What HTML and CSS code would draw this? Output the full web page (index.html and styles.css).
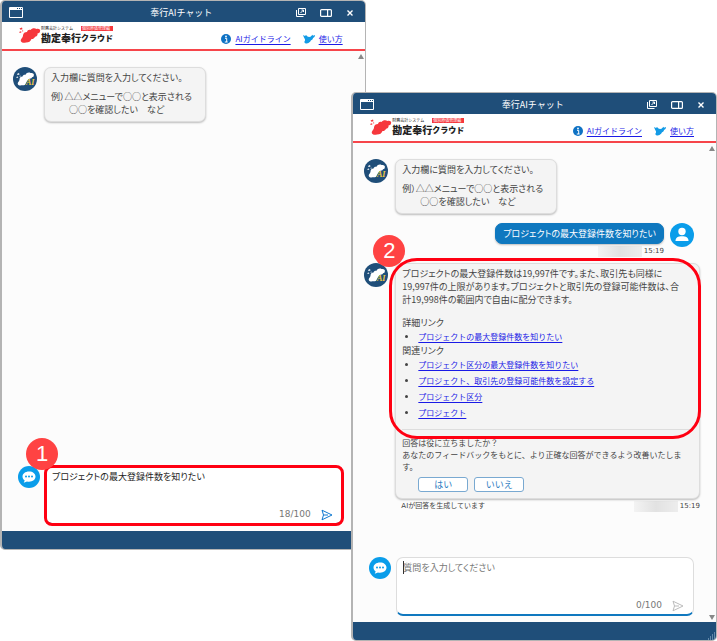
FILE: index.html
```
<!DOCTYPE html>
<html lang="ja">
<head>
	<title>奉行AIチャット</title>
	<meta charset="utf-8" />
	<meta name="viewport" content="width=device-width, initial-scale=1.0">
	<link rel="stylesheet" href="styles.css">
</head>
<body>
	<!-- shared icons -->
	<svg class="sprite" aria-hidden="true">
		<symbol id="app" viewBox="0 0 14 11">
			<path d="M.5.5h13v10H.5z" fill="none" stroke="#fff"/>
			<path d="M1 1h12v2H1z" fill="#fff"/>
			<path d="M8 1.500h1M10 1.500h1M12 1.500h1" stroke="#1f4e79"/>
		</symbol>
		<symbol id="popout" viewBox="0 0 10 9">
			<path d="M2.500.5h7v6h-7zM.5 2v6.500h7" fill="none" stroke="#fff"/>
			<path d="M4.500 5 7.500 2M5.500 2h2v2" fill="none" stroke="#fff"/>
		</symbol>
		<symbol id="dock" viewBox="0 0 12 8">
			<rect x=".6" y=".6" width="10.800" height="6.800" rx="1" fill="none" stroke="#fff" stroke-width="1.200"/>
			<path d="M7.600 1v6" stroke="#fff" stroke-width="1.200"/>
		</symbol>
		<symbol id="close" viewBox="0 0 8 8">
			<path d="m1.500 1.500 5 5m0-5-5 5" stroke="#fff" stroke-width="1.400"/>
		</symbol>
		<symbol id="info" viewBox="0 0 10 10">
			<circle cx="5" cy="5" r="5" fill="#0e72c4"/>
			<path d="M4 4.300h1.700V8M3.800 8h2.800" fill="none" stroke="#fff"/>
			<circle cx="5" cy="2.400" r=".9" fill="#fff"/>
		</symbol>
		<symbol id="cloud" viewBox="0 0 22 16">
			<path d="M2 14.500C1 12 4 11 4 8.500 4 6 6 5 8 5c.5-2 2-2.500 3.500-2C13 .8 16 .8 17.500 2c2-.8 4.500.5 3.500 2.500-.3 1.500-1.500 1.700-2.500 2 .5 2-1 3-2.500 3.200C15.500 11.500 14 12 12.500 12c-1 2.500-2.500 3.500-5.500 3.500-2 .3-4 .5-5-1z"/>
			<path d="m.5 1.500 2.500-1 .5 1.800-2 .5zM0 5l2-.8.5 1L1 6zM3 3.800l1-.5.300 1-1 .3z"/>
		</symbol>
		<symbol id="bird" viewBox="0 0 12 10">
			<path d="M0 1 2 2 3 1l1.500 1.500L6 3l1.500-.2L9.500.8l.5 1L12 1c0 1.500-.8 2.500-2 3-.2 1.500-1 2-2 2.200C7.500 8 6 8 5.500 9 4 9.800 2 9.500 1.500 8.500 1 7 2.500 7 2 5.500 1.500 4 .5 3 0 1z" fill="#139be6"/>
		</symbol>
		<symbol id="ai" viewBox="0 0 24 24">
			<circle cx="12" cy="12" r="12" fill="#1f4e79"/>
			<path d="M5 17.500C4 15.500 6.500 14.500 6.500 12.500c0-2 1.200-3 3-3 .4-1.600 1.700-2 3-1.700C13.500 5.500 16 5 17.500 6c2-.5 4 .6 3.300 2.500 0 1-.8 1.500-1.800 1.800-.2 1-.8 1.200-2 1.200-2 .5-2.800 2.500-4 4.500-.8 2-1.500 2.300-3.500 2.300-2 .2-3.800.4-4.500-.8z" fill="#fff"/>
			<path d="m4 7 2-1 .5 1.500-1.800.6zM3.300 10l1.600-.6.4 1-1.500.6zM6.500 9l1-.5.200 1-.9.2z" fill="#fff"/>
		</symbol>
		<symbol id="person" viewBox="0 0 24 24">
			<circle cx="12" cy="12" r="12" fill="#0a9dea"/>
			<circle cx="12" cy="8.500" r="3.700" fill="#fff"/>
			<path d="M5.500 18c0-3.500 2.500-4.700 6.500-4.700s6.500 1.200 6.500 4.700z" fill="#fff"/>
		</symbol>
		<symbol id="talk" viewBox="0 0 22 22">
			<circle cx="11" cy="11" r="11" fill="#0a9dea"/>
			<path d="M11 5.500c-3.800 0-6.500 2.200-6.500 5 0 1.700.9 3 2.200 4l-1 2.200 3.300-1.200c.6.100 1.300.2 2 .2 3.800 0 6.500-2.300 6.500-5.200s-2.700-5-6.500-5z" fill="#fff"/>
			<g fill="#0a9dea"><circle cx="8" cy="10.500" r="1"/><circle cx="11" cy="10.500" r="1"/><circle cx="14" cy="10.500" r="1"/></g>
		</symbol>
		<symbol id="send" viewBox="0 0 12 12">
			<path d="M1 1.200 11 6 1 10.800 2.500 6zM2.500 6H7" fill="none" stroke="currentColor"/>
		</symbol>
	</svg>

	<main class="desktop">
		<section class="window window-back">
			<div class="titlebar">
				<svg class="icon-app"><use href="#app"/></svg>
				<h1>奉行AIチャット</h1>
				<div class="controls">
					<button aria-label="別ウィンドウ"><svg class="icon-popout"><use href="#popout"/></svg></button>
					<button aria-label="ドッキング"><svg class="icon-dock"><use href="#dock"/></svg></button>
					<button aria-label="閉じる"><svg class="icon-close"><use href="#close"/></svg></button>
				</div>
			</div>
			<header class="header">
				<div class="logo">
					<svg class="logo-mark"><use href="#cloud"/></svg>
					<div class="logo-main"><small>財務会計システム</small><b>勘定奉行</b></div>
					<div class="logo-sub"><small>個別原価管理編</small><b>クラウド</b></div>
				</div>
				<nav>
					<svg class="icon-info"><use href="#info"/></svg><a href="#">AIガイドライン</a>
					<svg class="icon-bird"><use href="#bird"/></svg><a href="#">使い方</a>
				</nav>
			</header>
			<div class="body">
				<div class="content">
					<div class="row">
						<svg class="avatar" viewBox="0 0 24 24"><use href="#ai"/><text x="13" y="18">AI</text></svg>
						<div class="bubble greeting">
							<p>入力欄に質問を入力してください。</p>
							<p>例）△△メニューで○○と表示される<br>　　○○を確認したい　など</p>
						</div>
					</div>
					<form class="composer">
						<svg class="avatar-talk"><use href="#talk"/></svg>
						<div class="field marked">
							<textarea aria-label="質問">プロジェクトの最大登録件数を知りたい</textarea>
							<div class="tools">
								<span>18/100</span>
								<button class="send ready" type="button" aria-label="送信"><svg><use href="#send"/></svg></button>
							</div>
							<span class="step">1</span>
						</div>
					</form>
				</div>
				<div class="scrollbar"><i class="up"></i><i class="down"></i></div>
			</div>
			<div class="statusbar"></div>
		</section>

		<section class="window window-front">
			<div class="titlebar">
				<svg class="icon-app"><use href="#app"/></svg>
				<h1>奉行AIチャット</h1>
				<div class="controls">
					<button aria-label="別ウィンドウ"><svg class="icon-popout"><use href="#popout"/></svg></button>
					<button aria-label="ドッキング"><svg class="icon-dock"><use href="#dock"/></svg></button>
					<button aria-label="閉じる"><svg class="icon-close"><use href="#close"/></svg></button>
				</div>
			</div>
			<header class="header">
				<div class="logo">
					<svg class="logo-mark"><use href="#cloud"/></svg>
					<div class="logo-main"><small>財務会計システム</small><b>勘定奉行</b></div>
					<div class="logo-sub"><small>個別原価管理編</small><b>クラウド</b></div>
				</div>
				<nav>
					<svg class="icon-info"><use href="#info"/></svg><a href="#">AIガイドライン</a>
					<svg class="icon-bird"><use href="#bird"/></svg><a href="#">使い方</a>
				</nav>
			</header>
			<div class="body">
				<div class="content">
					<div class="row">
						<svg class="avatar" viewBox="0 0 24 24"><use href="#ai"/><text x="13" y="18">AI</text></svg>
						<div class="bubble greeting">
							<p>入力欄に質問を入力してください。</p>
							<p>例）△△メニューで○○と表示される<br>　　○○を確認したい　など</p>
						</div>
					</div>
					<div class="row row-user">
						<div>
							<div class="bubble question">プロジェクトの最大登録件数を知りたい</div>
							<div class="meta"><span class="blurred"></span><time>15:19</time></div>
						</div>
						<svg class="avatar"><use href="#person"/></svg>
					</div>
					<div class="row">
						<svg class="avatar" viewBox="0 0 24 24"><use href="#ai"/><text x="13" y="18">AI</text></svg>
						<div class="reply">
							<div class="bubble answer">
								<p>プロジェクトの最大登録件数は19,997件です。また、取引先も同様に<br>19,997件の上限があります。プロジェクトと取引先の登録可能件数は、合<br>計19,998件の範囲内で自由に配分できます。</p>
								<h2>詳細リンク</h2>
								<ul>
									<li><a href="#">プロジェクトの最大登録件数を知りたい</a></li>
								</ul>
								<h2>関連リンク</h2>
								<ul>
									<li><a href="#">プロジェクト区分の最大登録件数を知りたい</a></li>
									<li><a href="#">プロジェクト、取引先の登録可能件数を設定する</a></li>
									<li><a href="#">プロジェクト区分</a></li>
									<li><a href="#">プロジェクト</a></li>
								</ul>
								<div class="feedback">
									<p>回答は役に立ちましたか？<br>あなたのフィードバックをもとに、より正確な回答ができるよう改善いたします。</p>
									<button>はい</button>
									<button>いいえ</button>
								</div>
								<span class="outline"></span>
								<span class="step">2</span>
							</div>
							<div class="meta"><span class="note">AIが回答を生成しています</span><span class="blurred"></span><time>15:19</time></div>
						</div>
					</div>
					<form class="composer">
						<svg class="avatar-talk"><use href="#talk"/></svg>
						<div class="field focused">
							<textarea aria-label="質問" placeholder="質問を入力してください"></textarea>
							<div class="tools">
								<span>0/100</span>
								<button class="send" type="button" aria-label="送信"><svg><use href="#send"/></svg></button>
							</div>
						</div>
					</form>
				</div>
				<div class="scrollbar"><i class="up"></i><i class="down"></i></div>
			</div>
			<div class="statusbar"><svg class="grip" viewBox="0 0 8 8"><path d="M6 1h1M4 3h1M6 3h1M2 5h1M4 5h1M6 5h1M0 7h1M2 7h1M4 7h1M6 7h1" stroke="#a9c3da"/></svg></div>
		</section>
	</main>
</body>
</html>
```

FILE: styles.css
```
* {
	box-sizing: border-box;
}
html, body {
	height: 100%;
	margin: 0;
}
body {
	font-family: "Noto Sans CJK JP", sans-serif;
	font-size: 9px;
	line-height: 13px;
	color: #444;
	background: #fff;
}
h1, h2, p, ul {
	margin: 0;
	padding: 0;
	font-size: inherit;
	font-weight: normal;
}
button, textarea {
	font: inherit;
	margin: 0;
	padding: 0;
	border: none;
	background: transparent;
}
svg {
	display: block;
	flex: none;
}
a {
	color: #1a1ae6;
	text-underline-offset: 2px;
}
.sprite {
	position: absolute;
	width: 0;
	height: 0;
}
.desktop {
	position: relative;
	height: 100%;
	min-height: 641px;
	overflow: hidden;
}

/* windows */
.window {
	position: absolute;
	width: 51%;
	display: flex;
	flex-direction: column;
	background: #fcfcfc;
	border: 1px solid #b4b4b4;
	border-left-width: 2px;
	border-radius: 5px;
	overflow: hidden;
}
.window-back {
	top: 0;
	left: 0;
	bottom: 91px;
}
.window-front {
	top: 92px;
	right: 0;
	bottom: 0;
}
.titlebar {
	display: grid;
	grid-template-columns: 1fr auto 1fr;
	align-items: center;
	height: 21px;
	padding: 2px 11px 0 7px;
	color: #fff;
	background: #1f4e79;
}
.icon-app {
	width: 14px;
	height: 11px;
}
.icon-popout {
	width: 10px;
	height: 9px;
}
.icon-dock {
	width: 12px;
	height: 8px;
}
.icon-close {
	width: 8px;
	height: 8px;
}
.controls {
	display: flex;
	align-items: center;
	justify-content: flex-end;
	gap: 14px;
}
.header {
	display: flex;
	justify-content: space-between;
	height: 29px;
	padding: 4px 22px 0 17px;
	background: #fff;
	border-bottom: 2px solid #f6454a;
}
.header nav {
	display: flex;
	align-items: center;
	gap: 4px;
	padding-top: 2px;
	font-size: 8px;
}
.icon-info {
	width: 10px;
	height: 10px;
}
.icon-bird {
	width: 12px;
	height: 10px;
	margin-left: 8px;
}
.logo {
	display: flex;
	color: #222;
	white-space: nowrap;
}
.logo-mark {
	width: 22px;
	height: 18px;
	fill: #f6373c;
}
.logo small {
	display: block;
	font-size: 4px;
	line-height: 5px;
}
.logo b {
	display: block;
	font-weight: 900;
	font-size: 10px;
	line-height: 13px;
}
.logo-sub small {
	padding: 0 1px;
	color: #fff;
	background: #f6373c;
}
.logo-sub b {
	font-size: 8px;
}
.body {
	flex: 1;
	display: flex;
	min-height: 0;
}
.content {
	flex: 1;
	display: flex;
	flex-direction: column;
	padding: 16px 8px 0 11px;
}
.scrollbar {
	display: flex;
	flex-direction: column;
	justify-content: space-between;
	padding: 3px 1px 2px;
}
.scrollbar i {
	border: 3px solid transparent;
}
.scrollbar .up {
	border-top: none;
	border-bottom: 5px solid #888;
}
.scrollbar .down {
	border-bottom: none;
	border-top: 5px solid #888;
}
.statusbar {
	display: flex;
	align-items: flex-end;
	justify-content: flex-end;
	height: 18px;
	background: #1f4e79;
}
.grip {
	width: 8px;
	height: 8px;
}

/* messages */
.row {
	display: flex;
	gap: 7px;
}
.avatar {
	width: 24px;
	height: 24px;
}
.avatar text {
	font: italic bold 8px "Liberation Serif", serif;
	fill: #f0c840;
}
.bubble {
	position: relative;
	padding: 3px 6px;
	background: #f4f4f4;
	border: 1px solid #ddd;
	border-radius: 7px;
	box-shadow: 0 1px 2px rgba(0,0,0,.25);
}
.bubble,
.field textarea {
	font-feature-settings: "palt";
}
.greeting {
	min-width: 162px;
}
.greeting p {
	white-space: nowrap;
}
.greeting p + p {
	margin: 6px 0 2px;
}
.row-user {
	justify-content: flex-end;
	gap: 6px;
	margin: 9px 6px 6px 0;
}
.question {
	padding: 3px 7px;
	color: #fff;
	background: #0f78bf;
	border-color: #0f78bf;
}
.meta {
	display: flex;
	justify-content: flex-end;
	gap: 2px;
	margin-top: 2px;
	font: 7px/11px "DejaVu Sans", "Noto Sans CJK JP", sans-serif;
}
.note {
	flex: 1;
	padding-left: 6px;
}
.blurred {
	width: 44px;
	background: linear-gradient(90deg, #f3f3f3, #e2e2e2, #ededed);
}
.reply {
	flex: 1;
}
.answer h2 {
	line-height: 14px;
}
.answer p + h2 {
	margin-top: 10px;
}
.answer ul {
	padding-left: 16px;
	font-size: 8px;
	line-height: 14px;
	font-feature-settings: normal;
}
.answer li + li {
	margin-top: 2px;
}
.feedback {
	margin-top: 9px;
	padding: 7px 0 3px;
	border-top: 1px solid #ddd;
	font-size: 8px;
	line-height: 12px;
	font-feature-settings: normal;
}
.feedback button {
	width: 50px;
	height: 15px;
	margin: 4px 0 0 4px;
	font-size: 9px;
	color: #2b7bbf;
	background: #fff;
	border: 1px solid #79a9d1;
	border-radius: 3px;
}
.feedback p + button {
	margin-left: 16px;
}

/* input area */
.composer {
	display: flex;
	gap: 5px;
	margin: auto 6px 6px 5px;
}
.avatar-talk {
	width: 22px;
	height: 22px;
}
.field {
	position: relative;
	flex: 1;
	height: 59px;
	display: flex;
	flex-direction: column;
	padding: 3px 6px 2px;
	background: #fff;
	border: 1px solid #ddd;
	border-bottom: 2px solid #0f78bf;
	border-radius: 7px;
}
.field textarea {
	flex: 1;
	min-height: 0;
	color: #222;
	outline: none;
	resize: none;
}
.field textarea::placeholder {
	color: #777;
}
.focused::before {
	content: "";
	position: absolute;
	top: 3px;
	left: 6px;
	width: 1px;
	height: 13px;
	background: #333;
}
.tools {
	display: flex;
	align-items: center;
	justify-content: flex-end;
	gap: 10px;
	padding-right: 3px;
	font-family: "DejaVu Sans", sans-serif;
	color: #777;
}
.send {
	color: #bbb;
}
.send svg {
	width: 12px;
	height: 12px;
}
.send.ready {
	color: #0f78d0;
}

/* numbered callouts over the windows */
.marked {
	outline: 3px solid #ff0012;
	outline-offset: -2px;
}
.outline {
	position: absolute;
	top: -6px;
	left: -7px;
	right: -2px;
	height: 181px;
	border: 3px solid #ff0012;
	border-radius: 28px;
	pointer-events: none;
}
.step {
	position: absolute;
	top: -29px;
	left: -20px;
	width: 32px;
	height: 32px;
	border-radius: 50%;
	color: #fff;
	background: #ff4343;
	font: 22px/32px "Liberation Sans", sans-serif;
	text-align: center;
}
.answer .step {
	left: -23px;
}
```
